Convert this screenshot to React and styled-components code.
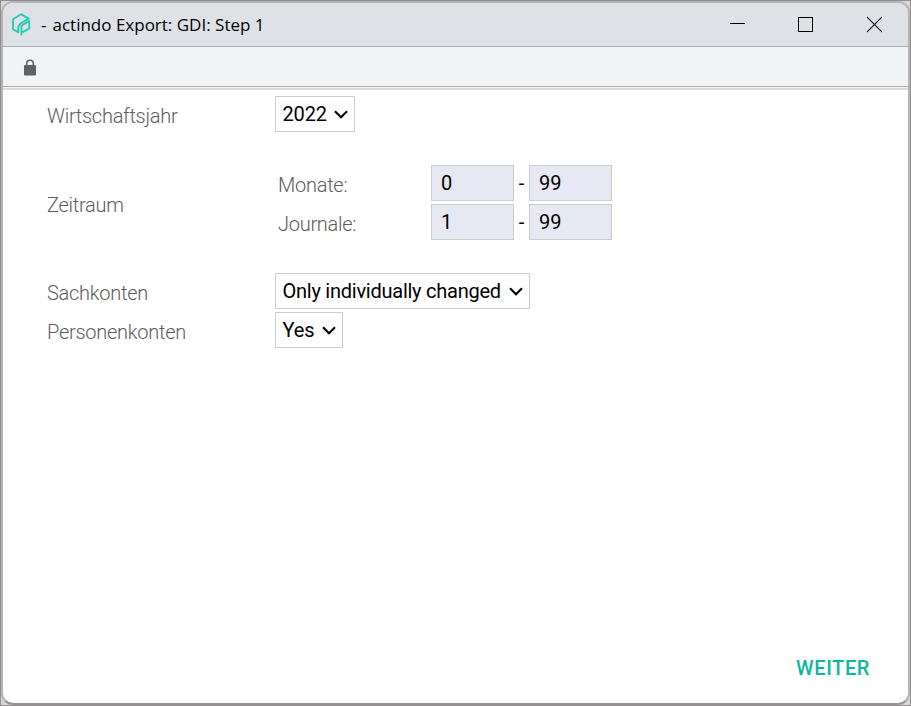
import React from "react";
import styled, { createGlobalStyle } from "styled-components";

const GlobalStyle = createGlobalStyle`
  *, *::before, *::after { box-sizing: border-box; }
  body { margin: 0; background: #d6d5d6; font-family: Roboto, "Liberation Sans", sans-serif; }
`;

const Desktop = styled.div`
  width: 911px;
  height: 706px;
  border: 1px solid #908e8f;
  background: #d9d8d9;
  overflow: hidden;
`;

const Window = styled.main`
  display: flex;
  flex-direction: column;
  width: 909px;
  height: 704px;
  border: 2px solid #b5b3b4;
  border-bottom-color: #969495;
  border-radius: 12px;
  background: #fff;
  overflow: hidden;
`;

const TitleBar = styled.header`
  display: flex;
  align-items: center;
  height: 44px;
  flex: none;
  background: #dee1e6;
  border-bottom: 1px solid #ababad;
  padding-left: 8px;
`;

const Logo = styled.svg`
  width: 20px;
  height: 24px;
  flex: none;
  margin-bottom: 2px;
`;

const Title = styled.h1`
  display: flex;
  gap: 6px;
  margin: 0 0 0 10px;
  font: 400 17px/24px "Open Sans", "Noto Sans", sans-serif;
  color: #000;
  white-space: nowrap;
`;

const WindowControls = styled.div`
  display: flex;
  margin-left: auto;
`;

const WindowButton = styled.button`
  display: grid;
  place-items: center;
  width: ${(p) => p.$width}px;
  height: 43px;
  padding: 0;
  border: 0;
  background: transparent;
  svg { display: block; width: 17px; height: 17px; }
`;

const AddressBar = styled.div`
  display: flex;
  align-items: center;
  height: 43px;
  flex: none;
  background: #f1f3f4;
  border-bottom: 2px solid #dadbdd;
  box-shadow: inset 0 -1px #f5f6f7, inset 0 -2px #ababad;
  padding-left: 20px;
  svg { display: block; }
`;

const Form = styled.form`
  flex: 1;
  display: flex;
  flex-direction: column;
  padding: 6px 38px 18px 44px;
`;

const Field = styled.div`
  display: grid;
  grid-template-columns: 228px 1fr;
  align-items: center;
  margin-bottom: ${(p) => p.$gap}px;
`;

const Label = styled.label`
  font-size: 20px;
  line-height: 24px;
  font-weight: 300;
  letter-spacing: -0.27px;
  color: #5c5c5c;
  padding-top: 4px;
`;

const SelectBox = styled.button`
  display: flex;
  align-items: center;
  justify-content: space-between;
  width: ${(p) => p.$width}px;
  height: 36px;
  padding: 0 5px 0 6.5px;
  border: 1px solid #ccc;
  background: #fff;
  color: #000;
  font: 400 20px/24px Roboto, sans-serif;
  letter-spacing: ${(p) => p.$tracking}px;
  white-space: nowrap;
  svg { display: block; flex: none; }
`;

const Ranges = styled.div`
  display: grid;
  row-gap: 3px;
`;

const RangeRow = styled.div`
  display: grid;
  grid-template-columns: 153px 83px 15px 83px;
  align-items: center;
  padding-left: 3px;
`;

const NumberInput = styled.input`
  width: 83px;
  height: 36px;
  padding: 0 9px;
  border: 1px solid #ccc;
  border-radius: 0;
  background: #e6e8f4;
  color: #000;
  font: 400 20px/24px Roboto, sans-serif;
`;

const Dash = styled.span`
  text-align: center;
  font-size: 20px;
  color: #000;
`;

const Footer = styled.footer`
  display: flex;
  justify-content: flex-end;
  margin-top: auto;
`;

const NextButton = styled.button`
  border: 0;
  padding: 0;
  background: transparent;
  color: #0db8a0;
  font: 500 20px/34px Roboto, sans-serif;
  letter-spacing: 0.6px;
`;

const Chevron = () => (
  <svg width="16" height="12" viewBox="0 0 16 12" fill="none">
    <path d="M2 3.2l6 6 6-6" stroke="#000" strokeWidth="2.1" />
  </svg>
);

const Select = ({ width, tracking = 0, children }) => (
  <SelectBox type="button" $width={width} $tracking={tracking}>
    {children}
    <Chevron />
  </SelectBox>
);

const Range = ({ label, from, to }) => (
  <RangeRow>
    <Label>{label}</Label>
    <NumberInput defaultValue={from} />
    <Dash>-</Dash>
    <NumberInput defaultValue={to} />
  </RangeRow>
);

export default function App() {
  return (
    <>
      <GlobalStyle />
      <Desktop>
        <Window>
          <TitleBar>
            <Logo viewBox="0 0 20 24" fill="none" stroke="#25cdb0" strokeWidth="1.9" strokeLinejoin="round">
              <path d="M7.2 20.2L2 17.2V7.2L10 2.2l7.8 4.4-6.4 3.7Q7.2 12.6 7.2 16.4z" />
              <path d="M10.4 23.6V15.6q0-2.1 2-3.3L18.2 9v7.6l-7.6 4" />
            </Logo>
            <Title>
              <span>-</span>
              <span>actindo Export: GDI: Step 1</span>
            </Title>
            <WindowControls>
              <WindowButton $width={68} aria-label="Minimize">
                <svg viewBox="0 0 17 17"><path d="M1 7.5h15" stroke="#000" /></svg>
              </WindowButton>
              <WindowButton $width={68} aria-label="Maximize">
                <svg viewBox="0 0 17 17"><rect x="1.5" y="1.5" width="14" height="14" fill="none" stroke="#000" /></svg>
              </WindowButton>
              <WindowButton $width={69} aria-label="Close">
                <svg viewBox="0 0 17 17"><path d="M2 1l15 15M17 1L2 16" stroke="#222" strokeWidth="1.1" /></svg>
              </WindowButton>
            </WindowControls>
          </TitleBar>
          <AddressBar>
            <svg width="14" height="18" viewBox="0 0 14 18">
              <path d="M3.7 7.5V4.5a3.3 3.3 0 0 1 6.6 0v3" fill="none" stroke="#5f6368" strokeWidth="1.6" />
              <rect x="1" y="6" width="12" height="10.5" rx="1.3" fill="#5f6368" />
            </svg>
          </AddressBar>
          <Form>
            <Field $gap={33}>
              <Label>Wirtschaftsjahr</Label>
              <Select width={80} tracking={-0.15}>2022</Select>
            </Field>
            <Field $gap={33}>
              <Label>Zeitraum</Label>
              <Ranges>
                <Range label="Monate:" from="0" to="99" />
                <Range label="Journale:" from="1" to="99" />
              </Ranges>
            </Field>
            <Field $gap={3}>
              <Label>Sachkonten</Label>
              <Select width={255} tracking={-0.25}>Only individually changed</Select>
            </Field>
            <Field $gap={0}>
              <Label>Personenkonten</Label>
              <Select width={68} tracking={-0.15}>Yes</Select>
            </Field>
            <Footer>
              <NextButton type="button">WEITER</NextButton>
            </Footer>
          </Form>
        </Window>
      </Desktop>
    </>
  );
}
